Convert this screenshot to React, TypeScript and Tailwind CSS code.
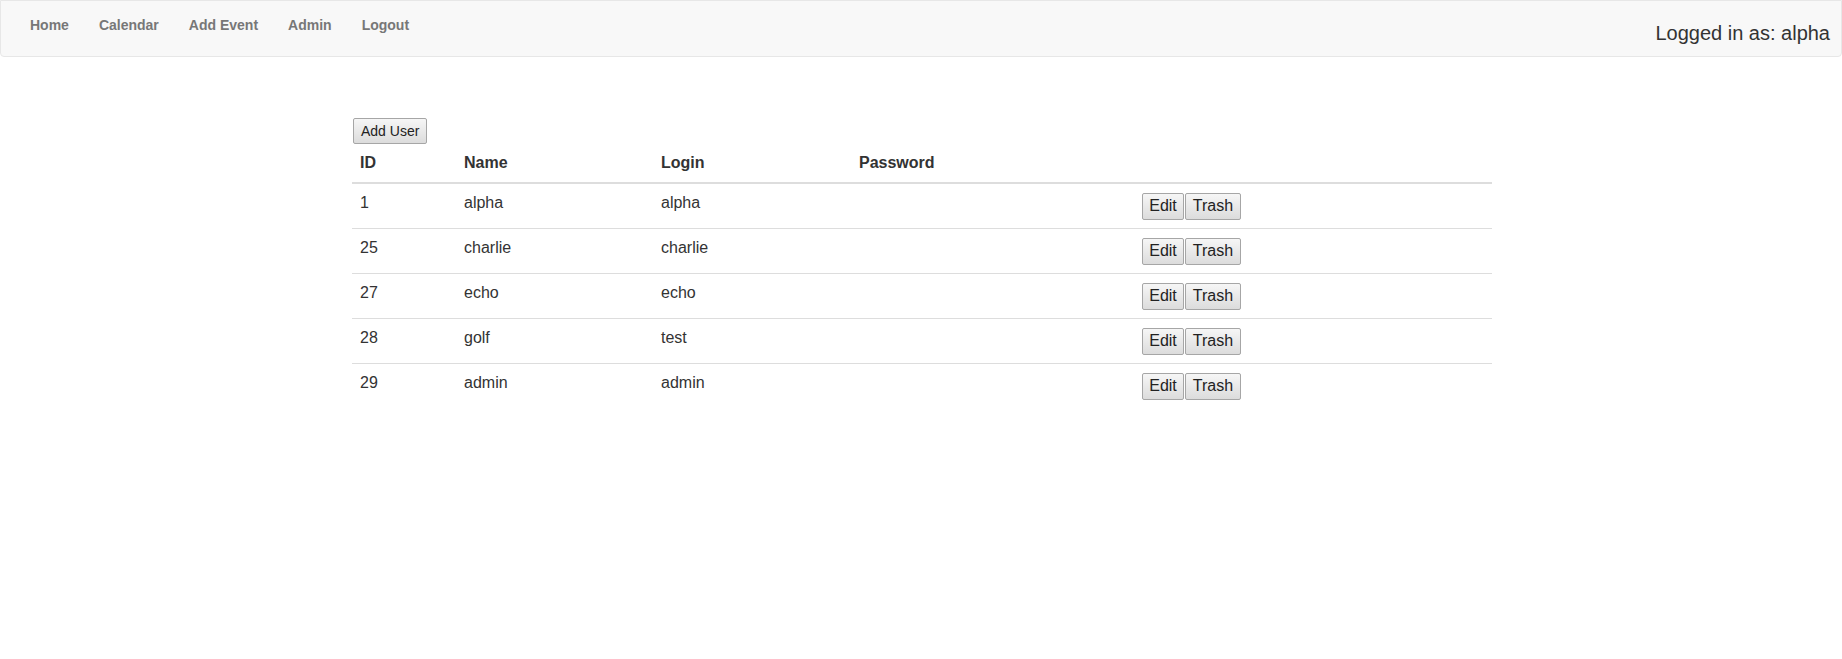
import React from "react";

const users = [
  { id: 1, name: "alpha", login: "alpha" },
  { id: 25, name: "charlie", login: "charlie" },
  { id: 27, name: "echo", login: "echo" },
  { id: 28, name: "golf", login: "test" },
  { id: 29, name: "admin", login: "admin" },
];

const navLinks = ["Home", "Calendar", "Add Event", "Admin", "Logout"];

const btn =
  "border border-[#a6a6a6] rounded-[2px] bg-gradient-to-b from-[#f6f6f6] to-[#dcdcdc] text-[#222] leading-none";

function App() {
  return (
    <div className="min-h-[659px] bg-white font-['Liberation_Sans',Arial,sans-serif] text-[#333]">
      <nav className="h-[57px] bg-[#f8f8f8] border border-[#e7e7e7] rounded-b-[4px] flex justify-between">
        <ul className="flex pl-[14px]">
          {navLinks.map((l) => (
            <li key={l}>
              <a className="block px-[15px] pt-[14px] leading-[20px] text-[14px] font-bold text-[#777]">
                {l}
              </a>
            </li>
          ))}
        </ul>
        <div className="pt-[20px] pr-[11px] text-[20px] leading-[24px] text-[#333]">
          Logged in as: alpha
        </div>
      </nav>

      <div className="w-[1140px] mx-auto pt-[61px] pl-[2px] box-content">
        <button className={`${btn} h-[26px] px-[7px] ml-px text-[14px]`}>Add User</button>
        <table className="w-[1140px] border-collapse text-[16px] leading-[22.86px] table-fixed">
          <thead>
            <tr>
              <th className="w-[104px] text-left font-bold px-[8px] pt-[8px] pb-[7px] border-b-2 border-[#ddd] align-bottom">ID</th>
              <th className="w-[197px] text-left font-bold px-[8px] pt-[8px] pb-[7px] border-b-2 border-[#ddd] align-bottom">Name</th>
              <th className="w-[198px] text-left font-bold px-[8px] pt-[8px] pb-[7px] border-b-2 border-[#ddd] align-bottom">Login</th>
              <th className="w-[283px] text-left font-bold px-[8px] pt-[8px] pb-[7px] border-b-2 border-[#ddd] align-bottom">Password</th>
              <th className="w-[358px] px-[8px] pt-[8px] pb-[7px] border-b-2 border-[#ddd]"></th>
            </tr>
          </thead>
          <tbody>
            {users.map((u, i) => (
              <tr key={u.id} className={i > 0 ? "border-t border-[#ddd]" : ""}>
                <td className="px-[8px] pt-[8px] pb-[8px] align-top h-[45px]">{u.id}</td>
                <td className="px-[8px] pt-[8px] align-top">{u.name}</td>
                <td className="px-[8px] pt-[8px] align-top">{u.login}</td>
                <td className="px-[8px] pt-[8px] align-top"></td>
                <td className="px-[8px] pt-[9px] pb-[8px] align-top">
                  <div className="flex">
                    <button className={`${btn} h-[27px] w-[42px] text-[16px]`}>Edit</button>
                    <button className={`${btn} h-[27px] w-[56px] ml-px text-[16px]`}>Trash</button>
                  </div>
                </td>
              </tr>
            ))}
          </tbody>
        </table>
      </div>
    </div>
  );
}

export default App;
